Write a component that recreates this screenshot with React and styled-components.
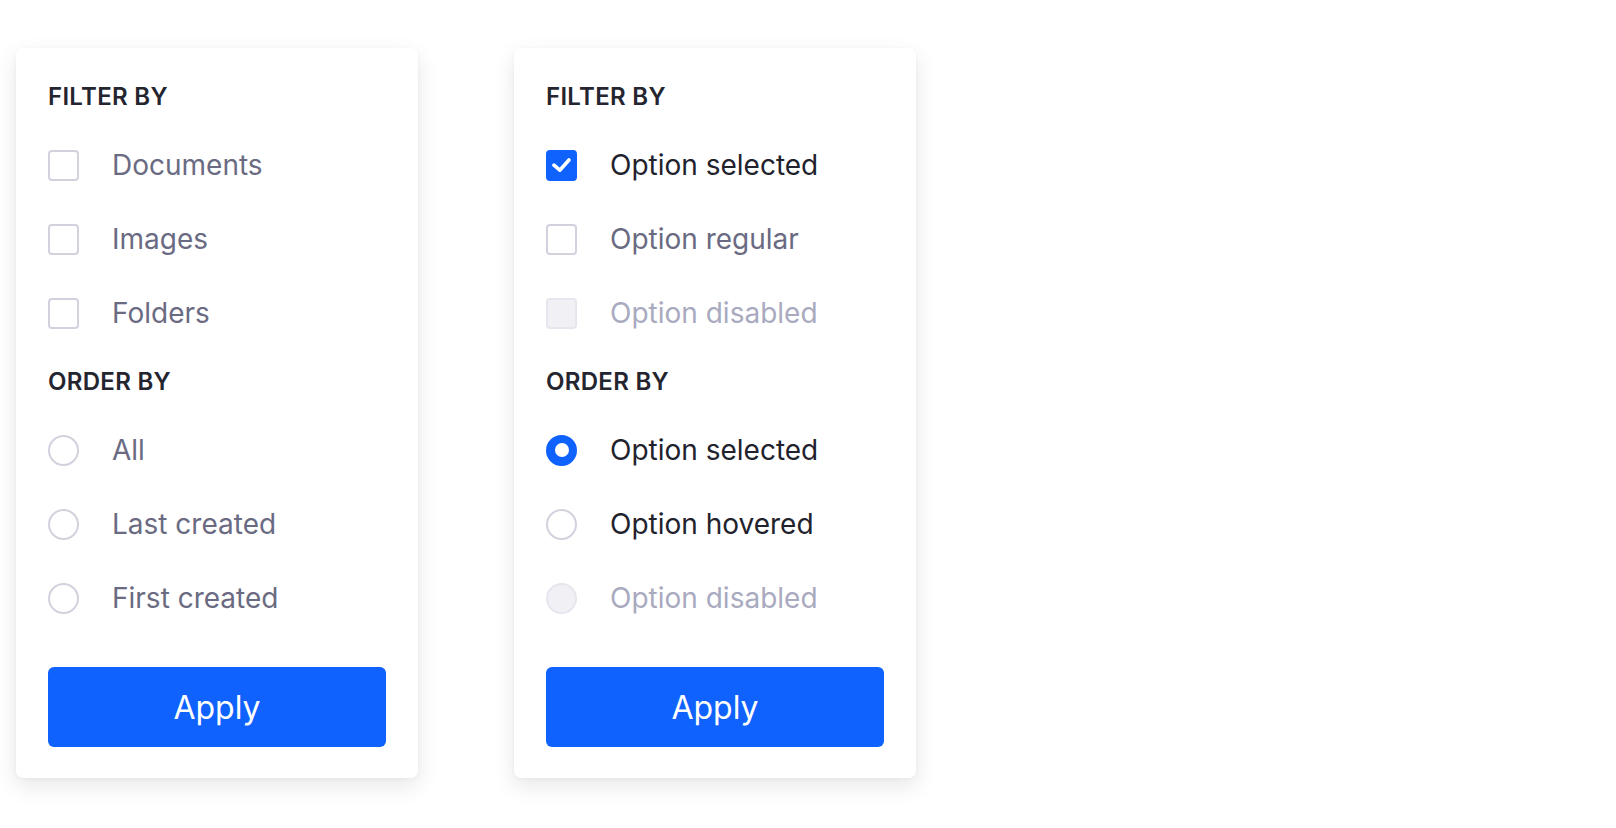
import React from "react";
import styled, { createGlobalStyle, css } from "styled-components";

const GlobalStyle = createGlobalStyle`
  * {
    box-sizing: border-box;
  }
  body {
    margin: 0;
    background: #fff;
    font-family: Inter, "Noto Sans", "Liberation Sans", sans-serif;
  }
`;

const Page = styled.div`
  display: flex;
  align-items: flex-start;
  gap: 96px;
  padding: 48px 16px;
`;

const Card = styled.div`
  width: 402px;
  display: flex;
  flex-direction: column;
  padding: 33px 32px 31px;
  background: #fff;
  border-radius: 7px;
  box-shadow: 0 8px 22px rgba(20, 20, 40, 0.1), 0 1px 4px rgba(20, 20, 40, 0.04);
`;

const SectionTitle = styled.h3`
  margin: 0 0 28px;
  font-size: 24px;
  line-height: 32px;
  font-weight: 600;
  letter-spacing: 0.3px;
  color: #25252f;
`;

const OptionList = styled.div`
  display: flex;
  flex-direction: column;
  gap: 26px;
  & + ${SectionTitle} {
    margin-top: 29px;
  }
`;

const Row = styled.label`
  display: flex;
  align-items: center;
  height: 48px;
  gap: 33px;
  cursor: ${(p) => (p.$disabled ? "default" : "pointer")};
`;

const Label = styled.span`
  font-size: 28px;
  font-weight: 400;
  color: ${(p) =>
    p.$tone === "dark" ? "#22222d" : p.$tone === "disabled" ? "#a9aac0" : "#6a6b82"};
`;

const boxBase = css`
  flex: none;
  width: 31px;
  height: 31px;
  display: flex;
  align-items: center;
  justify-content: center;
  border: 2px solid #d2d2de;
  background: #fff;
`;

const CheckBox = styled.span`
  ${boxBase};
  border-radius: 4px;
  ${(p) =>
    p.$checked &&
    css`
      background: #0f62fe;
      border-color: #0f62fe;
    `}
  ${(p) =>
    p.$disabled &&
    css`
      background: #f0f0f5;
      border-color: #e6e6ee;
    `}
`;

const RadioCircle = styled.span`
  ${boxBase};
  border-radius: 50%;
  ${(p) =>
    p.$checked &&
    css`
      background: #0f62fe;
      border-color: #0f62fe;
      &::after {
        content: "";
        width: 14px;
        height: 14px;
        border-radius: 50%;
        background: #fff;
      }
    `}
  ${(p) =>
    p.$disabled &&
    css`
      background: #f0f0f5;
      border-color: #e6e6ee;
    `}
`;

const ApplyButton = styled.button`
  margin-top: 45px;
  height: 80px;
  width: 100%;
  border: none;
  border-radius: 6px;
  background: #0f62fe;
  color: #fff;
  font-family: inherit;
  font-size: 32px;
  font-weight: 400;
  cursor: pointer;
  &:hover {
    background: #0353e9;
  }
`;

const Check = () => (
  <svg width="19" height="14" viewBox="0 0 19 14" fill="none">
    <path
      d="M2 7.2L7.8 12.2L17 2"
      stroke="#fff"
      strokeWidth="3.6"
      strokeLinecap="round"
      strokeLinejoin="round"
    />
  </svg>
);

const CheckOption = ({ label, checked, disabled, tone }) => (
  <Row $disabled={disabled}>
    <CheckBox $checked={checked} $disabled={disabled}>
      {checked && <Check />}
    </CheckBox>
    <Label $tone={tone}>{label}</Label>
  </Row>
);

const RadioOption = ({ label, checked, disabled, tone }) => (
  <Row $disabled={disabled}>
    <RadioCircle $checked={checked} $disabled={disabled} />
    <Label $tone={tone}>{label}</Label>
  </Row>
);

const FilterCard = ({ checks, radios }) => (
  <Card>
    <SectionTitle>FILTER BY</SectionTitle>
    <OptionList>
      {checks.map((o) => (
        <CheckOption key={o.label} {...o} />
      ))}
    </OptionList>
    <SectionTitle>ORDER BY</SectionTitle>
    <OptionList>
      {radios.map((o) => (
        <RadioOption key={o.label} {...o} />
      ))}
    </OptionList>
    <ApplyButton type="button">Apply</ApplyButton>
  </Card>
);

const basicChecks = [
  { label: "Documents" },
  { label: "Images" },
  { label: "Folders" },
];

const basicRadios = [
  { label: "All" },
  { label: "Last created" },
  { label: "First created" },
];

const stateChecks = [
  { label: "Option selected", checked: true, tone: "dark" },
  { label: "Option regular" },
  { label: "Option disabled", disabled: true, tone: "disabled" },
];

const stateRadios = [
  { label: "Option selected", checked: true, tone: "dark" },
  { label: "Option hovered", tone: "dark" },
  { label: "Option disabled", disabled: true, tone: "disabled" },
];

const App = () => (
  <>
    <GlobalStyle />
    <Page>
      <FilterCard checks={basicChecks} radios={basicRadios} />
      <FilterCard checks={stateChecks} radios={stateRadios} />
    </Page>
  </>
);

export default App;
